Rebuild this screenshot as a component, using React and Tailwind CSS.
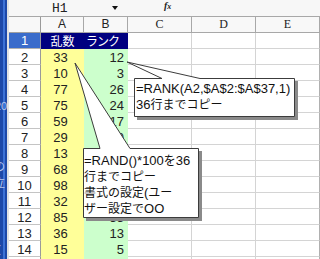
const colA = [33, 10, 77, 75, 59, 29, 13, 68, 98, 32, 85, 36, 15, 47];
const colB = [12, 3, 26, 24, 17, 10, 4, 22, 36, 11, 33, 13, 5, 16];

const sans = { fontFamily: '"Liberation Sans", Arial, sans-serif' };
const jp = { fontFamily: '"Noto Sans CJK JP", sans-serif' };

function L({ children }) {
  return <span className="text-[13px]" style={sans}>{children}</span>;
}

function Grid() {
  return (
    <>
      <div className="w-[64px] shrink-0 border-r border-b border-[#d4d4d4]" />
      <div className="w-[64px] shrink-0 border-r border-b border-[#d4d4d4]" />
      <div className="w-[64px] shrink-0 border-r border-b border-[#d4d4d4] border-r-[#b0b0b0]" />
    </>
  );
}

export default function App() {
  return (
    <div className="relative w-[320px] h-[259px] overflow-hidden bg-white flex text-[#222]" style={sans}>
      <div className="relative w-[7px] shrink-0 bg-[#1d48a8] overflow-hidden">
        <div className="absolute left-[3px] top-0 bottom-0 w-[2px] bg-[#3d72d6]" />
        <span className="absolute left-[-5px] top-[98px] text-[11px] text-[#b8c8ef]">20</span>
        <span className="absolute left-[-6px] top-[158px] text-[11px] text-[#b8c8ef]" style={jp}>の</span>
        <span className="absolute left-[-6px] top-[174px] text-[11px] text-[#b8c8ef]" style={jp}>立</span>
        <span className="absolute left-[-3px] top-[241px] text-[11px] text-[#b8c8ef]">(</span>
      </div>
      <div className="w-[2px] shrink-0 bg-[#e2e2e2]" />

      <div className="flex flex-col w-[311px] shrink-0">
        {/* formula bar */}
        <div className="h-[17px] shrink-0 flex items-start bg-[#f7f7f7] border-b border-[#a8a8a8]">
          <span className="ml-[43px] mt-[1px] w-[16px] text-[13px] leading-[15px]" style={{ fontFamily: '"Liberation Mono", monospace' }}>H1</span>
          <svg className="ml-[44px] mt-[6px]" width="6" height="4" viewBox="0 0 6 4">
            <path d="M0 0H6L3 4Z" fill="#111" />
          </svg>
          <span className="ml-[46px] mt-[-1px] text-[10px] italic font-bold leading-[13px]" style={{ fontFamily: '"Liberation Serif", serif' }}>
            f<span className="text-[8px]">x</span>
          </span>
        </div>

        {/* column headers */}
        <div className="h-[16px] shrink-0 flex bg-[#f8f8f8] text-[12px] leading-[15px]">
          <div className="w-[32px] shrink-0 border-r border-b border-r-[#9a9a9a] border-b-[#a0a0a0]" />
          <div className="w-[43px] shrink-0 border-r border-b border-[#a8a8a8] text-center">A</div>
          <div className="w-[44px] shrink-0 border-r border-b border-[#a8a8a8] text-center">B</div>
          {["C", "D", "E"].map((c) => (
            <div key={c} className="w-[64px] shrink-0 border-r border-b border-[#a8a8a8] text-center" style={{ fontFamily: '"Liberation Serif", serif' }}>{c}</div>
          ))}
        </div>

        {/* row 1 */}
        <div className="h-[16px] shrink-0 flex leading-[15px]">
          <div className="w-[32px] shrink-0 bg-[#3a6ccb] text-white text-[13px] text-center border-r border-b border-r-[#9a9a9a] border-b-[#b0b0b0]">1</div>
          <div className="w-[43px] shrink-0 bg-[#000080] text-white text-[12px] text-center border-b border-[#000080]" style={jp}>乱数</div>
          <div className="w-[44px] shrink-0 bg-[#000080] text-white text-[12px] pl-[2px] tracking-[-1px] border-b border-[#000080] whitespace-nowrap" style={jp}>ランク</div>
          <Grid />
        </div>

        {colA.map((a, i) => (
          <div key={i} className="h-[16px] shrink-0 flex text-[13px] leading-[15px]">
            <div className="w-[32px] shrink-0 bg-white text-center pt-[1px] border-r border-b border-r-[#9a9a9a] border-b-[#c4c4c4]">{i + 2}</div>
            <div className="w-[43px] shrink-0 bg-[#ffff99] text-center pt-[1px] pr-[4px]">{a}</div>
            <div className="w-[44px] shrink-0 bg-[#ccffcc] text-right pt-[1px] pr-[4px]">{colB[i]}</div>
            <Grid />
          </div>
        ))}
      </div>

      {/* comment callouts */}
      <svg className="absolute left-0 top-0" width="320" height="259" viewBox="0 0 320 259">
        <rect x="137" y="81" width="161" height="39" fill="#8a8a8a" />
        <path d="M134.5 78.5H162L127 62L200 78.5H294.5V116.5H134.5Z" fill="#fff" stroke="#3c3c3c" strokeWidth="1" />
        <rect x="86" y="151" width="116" height="70" fill="#8a8a8a" />
        <path d="M83.5 148.5H100L75 63L130 148.5H198.5V217.5H83.5Z" fill="#fff" stroke="#3c3c3c" strokeWidth="1" />
      </svg>

      <div className="absolute left-[136px] top-[80px] text-[12px] text-[#111]" style={jp}>
        <div className="h-[16px] leading-[15px] whitespace-nowrap"><L>=RANK(A2,$A$2:$A$37,1)</L></div>
        <div className="h-[16px] leading-[15px] whitespace-nowrap"><L>36</L>行までコピー</div>
      </div>

      <div className="absolute left-[84px] top-[152px] text-[12px] text-[#111]" style={jp}>
        <div className="h-[16px] leading-[15px] whitespace-nowrap"><L>=RAND()*100</L>を<L>36</L></div>
        <div className="h-[16px] leading-[15px] whitespace-nowrap">行までコピー</div>
        <div className="h-[16px] leading-[15px] whitespace-nowrap">書式の設定<L>(</L>ユー</div>
        <div className="h-[16px] leading-[15px] whitespace-nowrap">ザー設定で<L>OO</L></div>
      </div>
    </div>
  );
}
